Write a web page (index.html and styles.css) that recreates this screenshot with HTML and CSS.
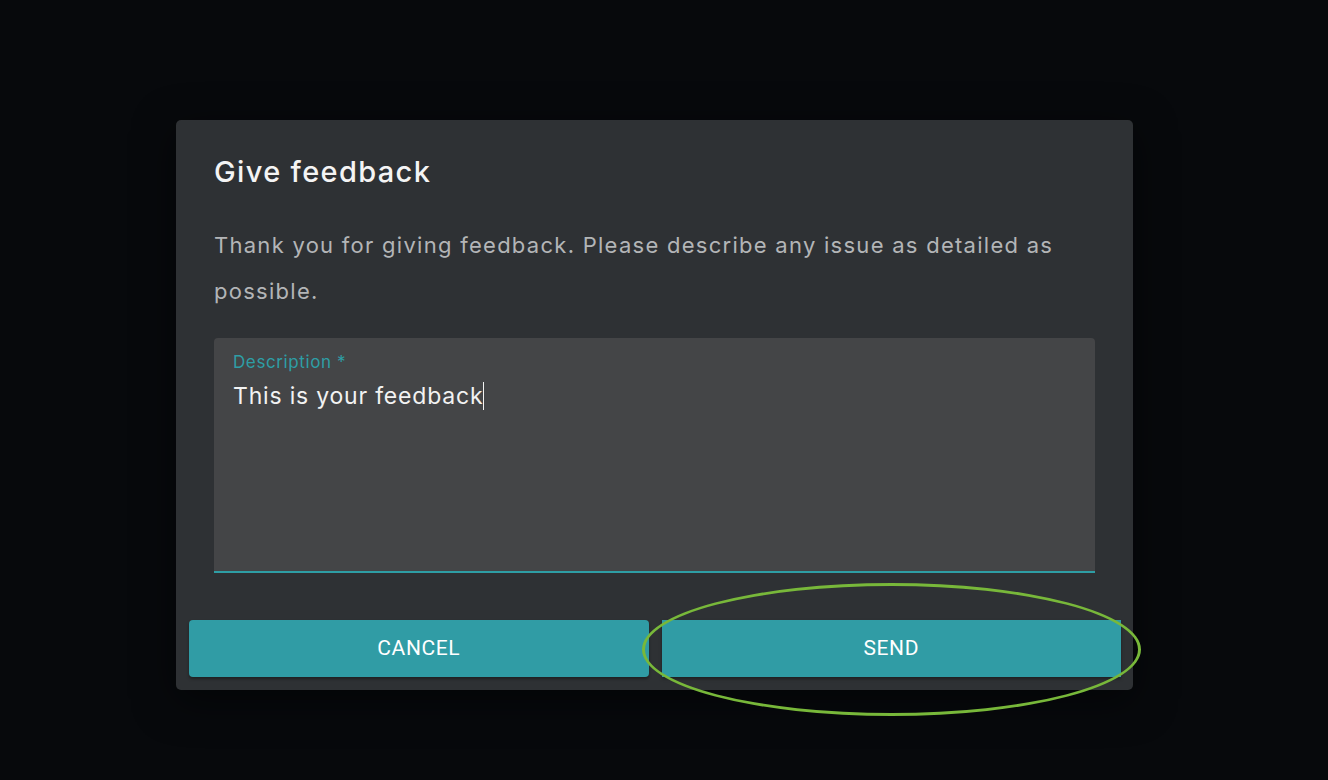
FILE: index.html
```html
<!DOCTYPE html>
<html lang="en">
<head>
    <meta charset="UTF-8">
    <meta name="viewport" content="width=device-width, initial-scale=1.0">
    <title>Give feedback</title>
    <link rel="stylesheet" href="styles.css">
</head>
<body>
    <div class="overlay">
        <div class="dialog">
            <h2 class="dialog-title">Give feedback</h2>
            <p class="dialog-text">Thank you for giving feedback. Please describe any issue as detailed as possible.</p>

            <div class="field">
                <label class="field-label">Description *</label>
                <div class="field-value">This is your feedback<span class="caret"></span></div>
            </div>

            <div class="actions">
                <button class="btn">CANCEL</button>
                <button class="btn btn-send">SEND</button>
            </div>
        </div>
    </div>
</body>
</html>
```

FILE: styles.css
```css
* {
    margin: 0;
    padding: 0;
    box-sizing: border-box;
}

body {
    font-family: Inter, 'Noto Sans', sans-serif;
    background: #07090c;
    color: #fff;
    height: 100vh;
    overflow: hidden;
}

.overlay {
    padding-top: 120px;
    padding-left: 176px;
}

.dialog {
    width: 957px;
    height: 570px;
    background: #2e3134;
    border-radius: 5px;
    padding: 36px 38px 0 38px;
    box-shadow: 0 10px 40px rgba(0, 0, 0, 0.5);
}

.dialog-title {
    font-size: 29px;
    font-weight: 500;
    color: #f4f4f4;
    line-height: 32px;
    letter-spacing: 1.35px;
}

.dialog-text {
    margin-top: 34px;
    font-size: 22px;
    line-height: 46px;
    color: #b3b5b7;
    width: 875px;
    letter-spacing: 1.27px;
}

.field {
    margin-top: 24px;
    height: 235px;
    background: #444547;
    border-radius: 4px 4px 0 0;
    border-bottom: 2px solid #2e9ea5;
    padding: 14px 19px;
}

.field-label {
    display: block;
    font-size: 17px;
    line-height: 20px;
    color: #2e9ea5;
    letter-spacing: 0.6px;
}

.field-value {
    margin-top: 9px;
    font-size: 23px;
    line-height: 30px;
    color: #f2f2f2;
    letter-spacing: 0.8px;
}

.caret {
    display: inline-block;
    width: 1px;
    height: 28px;
    background: #f2f2f2;
    vertical-align: -6px;
}

.actions {
    display: flex;
    gap: 13px;
    margin: 47px -26px 0 -25px;
}

.btn {
    flex: 1;
    height: 57px;
    background: #309ca5;
    color: #fff;
    border: none;
    border-radius: 4px;
    font-family: Roboto, 'Liberation Sans', sans-serif;
    font-size: 21px;
    letter-spacing: 0.6px;
    padding-bottom: 1px;
    box-shadow: 0 2px 3px rgba(0, 0, 0, 0.35);
}

.btn-send {
    position: relative;
    border-radius: 0;
}

/* highlight ring drawn over the send button */
.btn-send::after {
    content: "";
    position: absolute;
    left: -20px;
    right: -20px;
    top: -37px;
    bottom: -39px;
    border: 3px solid #78b83a;
    border-radius: 50%;
}
```
